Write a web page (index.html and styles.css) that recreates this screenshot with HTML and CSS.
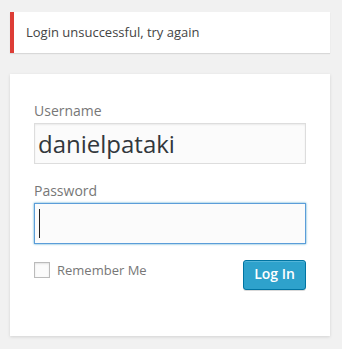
FILE: index.html
```html
<!DOCTYPE html>
<html>
<head>
<meta charset="utf-8">
<link rel="stylesheet" href="styles.css">
</head>
<body>
<div class="login">
  <div class="login-error">Login unsuccessful, try again</div>
  <form class="login-form">
    <label class="field-label">Username</label>
    <div class="field">danielpataki</div>
    <label class="field-label">Password</label>
    <div class="field field-focus"><span class="caret"></span></div>
    <div class="actions">
      <label class="remember"><span class="checkbox"></span>Remember Me</label>
      <button type="button" class="button-primary">Log In</button>
    </div>
  </form>
</div>
</body>
</html>
```
FILE: styles.css
```css
html, body {
  margin: 0;
  padding: 0;
  background: #f1f1f1;
  font-family: "Open Sans", "Liberation Sans", sans-serif;
}
.login {
  width: 320px;
  padding: 12px 10px;
}
.login-error {
  background: #fff;
  border-left: 4px solid #dd3d36;
  padding: 12px 12px;
  font-size: 13px;
  line-height: 17px;
  color: #444;
  box-shadow: 0 1px 1px 0 rgba(0,0,0,.1);
}
.login-form {
  margin: 21px 0 0;
  background: #fff;
  padding: 26px 24px 46px;
  box-shadow: 0 1px 3px rgba(0,0,0,.13);
}
.field-label {
  display: block;
  font-size: 14px;
  line-height: 21px;
  color: #777;
}
.field {
  box-sizing: border-box;
  height: 41px;
  margin: 2px 0 16px;
  padding: 0 3px;
  background: #fbfbfb;
  border: 1px solid #ddd;
  box-shadow: inset 0 1px 2px rgba(0,0,0,.07);
  font-size: 24px;
  line-height: 38px;
  color: #32373c;
  display: flex;
  align-items: center;
}
.field-focus {
  border-color: #5b9dd9;
  box-shadow: 0 0 2px rgba(30,140,190,.8);
}
.caret {
  display: block;
  width: 1px;
  height: 29px;
  background: #222;
  margin-left: 1px;
}
.actions {
  display: flex;
  justify-content: space-between;
  align-items: flex-start;
}
.remember {
  display: flex;
  align-items: center;
  font-size: 13px;
  color: #777;
  margin-top: 2px;
  line-height: 16px;
}
.checkbox {
  box-sizing: border-box;
  width: 16px;
  height: 16px;
  border: 1px solid #bbb;
  background: #fbfbfb;
  box-shadow: inset 0 1px 2px rgba(0,0,0,.1);
  margin-right: 7px;
}
.button-primary {
  box-sizing: border-box;
  width: 63px;
  height: 30px;
  padding: 0 0 2px;
  background: #2ea2cc;
  border: 1px solid #0074a2;
  border-radius: 3px;
  box-shadow: inset 0 1px 0 rgba(120,200,230,.5), 0 1px 0 rgba(0,0,0,.15);
  color: #fff;
  font-family: "Open Sans", "Liberation Sans", sans-serif;
  font-size: 14px;
  font-weight: 600;
  line-height: 26px;
}
```
